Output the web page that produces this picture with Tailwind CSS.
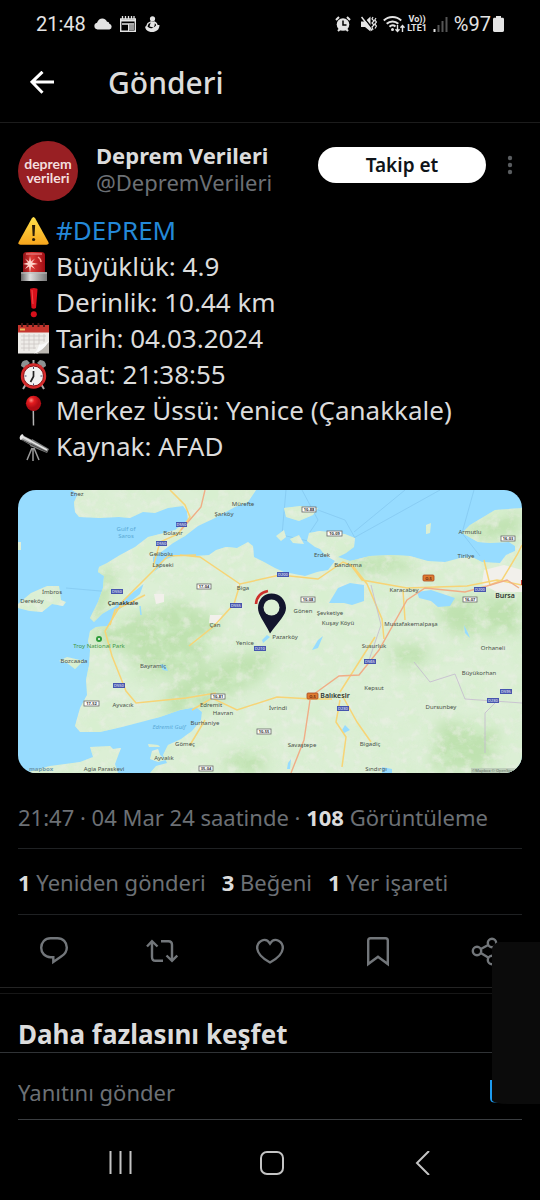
<!DOCTYPE html>
<html lang="tr">
<head>
<meta charset="utf-8">
<meta name="viewport" content="width=device-width, initial-scale=1">
<title>Gönderi</title>
<script src="https://cdn.jsdelivr.net/npm/@tailwindcss/browser@4"></script>
</head>
<body class="bg-black text-[#dcdcdc] font-['Noto_Sans',sans-serif]">
<div class="relative min-h-screen flex flex-col overflow-hidden">

<!-- Status bar -->
<div class="flex h-12 items-center justify-between pl-9 pr-9 font-['Roboto',sans-serif] text-[20px] text-[#e4e4e4]">
  <div class="flex items-center gap-2">
    <span>21:48</span>
    <svg class="w-[18px] h-3" viewBox="0 0 18 12" fill="currentColor"><path d="M3.5 11.500a3.400 3.400 0 0 1-.5-6.700C4 2 6 .5 8.300.5c2.400 0 4 1.300 4.700 3.300 1.200-.2 2.200.6 2.300 1.900a3 3 0 0 1 .2 5.800z"/></svg>
    <svg class="w-4 h-4" viewBox="0 0 16 16" fill="none" stroke="currentColor"><path d="M.7 3v12.200h14.600V3z" stroke-width="1.400"/><path d="M1 4.500h14" stroke-width="2"/><path d="M2.500 0v3M5.500 0v3M8.500 0v3M11.500 0v3M14 0v3" stroke-width="1.300"/><path d="M2 8h12" stroke-width="1.500"/><path d="M9 9h5v5H9z" fill="#999" stroke="none"/><path d="M8.500 8v7"/></svg>
    <svg class="w-4 h-4" viewBox="0 0 16 16" fill="currentColor"><circle cx="8.500" cy="2.800" r="2.600"/><path d="M7 5.500h3.500q1 3.500-1 6l-4-1zM1 10.500h2.500q2 2.500 5 1.500 2.500-.8 4-3h3q0 5-4.500 6.500-3 1-6 0Q1.500 14.500 1 10.500z"/><path d="M7.500 5.500L4 7.500 2.500 11M10 6q3 1 3 4" fill="none" stroke="currentColor" stroke-width="1.400"/></svg>
  </div>
  <div class="flex items-center gap-[6px]">
    <svg class="w-4 h-4" viewBox="0 0 16 16"><circle cx="8" cy="8.500" r="6.300" fill="currentColor"/><path d="M8 4.500V9h3.500" fill="none" stroke="#000" stroke-width="1.500"/><path d="M1 4l3-3M15 4l-3-3M3 15l2-2M13 15l-2-2" stroke="currentColor" stroke-width="2"/></svg>
    <svg class="ml-1 w-4 h-4" viewBox="0 0 16 16"><path d="M0 5.500h4l5.500-5v15L4 11H0z" fill="currentColor"/><path d="M1.500 0l10 12.500" stroke="#000" stroke-width="1.500"/><path d="M.500 1l10.500 13.500" stroke="currentColor" stroke-width="1.500"/><path d="M12 1l-1 2 2 2-2 2 2 2-2 2 1 3M15 2l-1.200 2 1.700 2-1.700 2 1.700 2-1.500 2.500" fill="none" stroke="currentColor" stroke-width="1.200"/></svg>
    <svg class="w-[22px] h-[18px]" viewBox="0 0 22 18" fill="none" stroke="currentColor" stroke-width="2"><path d="M.8 5.500a12.500 12.500 0 0 1 17.400 0M3.700 8.700a8.500 8.500 0 0 1 11.600 0M6.500 11.800a4.500 4.500 0 0 1 6-.3"/><circle cx="9.500" cy="14.500" r="1.500" fill="currentColor" stroke="none"/><path d="M14.500 10v6.500m-2-2.200l2 2.200 2-2.200M19.500 17v-6.500m-2 2.200l2-2.200 2 2.200" stroke-width="1.400"/></svg>
    <div class="-ml-1 flex flex-col items-center text-[9px] leading-[9px] font-bold"><span>Vo))</span><span>LTE1</span></div>
    <svg class="w-[15px] h-[15px]" viewBox="0 0 15 15"><path d="M1.500 12v3" stroke="#e4e4e4" stroke-width="2"/><path d="M5.500 8v7M9.500 4v11M13.500 0v15" stroke="#555" stroke-width="2"/></svg>
    <div class="flex items-center gap-[2px]"><span>%97</span>
    <svg class="w-[11px] h-4" viewBox="0 0 11 16" fill="currentColor"><path d="M3 1.800V0h5v1.800h1.500c1 0 1.500.5 1.500 1.500v11c0 1-.5 1.700-1.500 1.700h-8C.5 16 0 15.300 0 14.300v-11c0-1 .5-1.500 1.500-1.500z"/></svg></div>
  </div>
</div>

<!-- App bar -->
<header class="flex h-[75px] items-center gap-[54px] border-b border-[#1c1c1c] pb-1 pl-[30px]">
  <button aria-label="Geri" class="block"><svg class="w-6 h-6 text-white" viewBox="0 0 24 24" fill="none" stroke="currentColor" stroke-width="3"><path d="M24 11H2M12.500.8L2 11l10.500 10.800"/></svg></button>
  <h1 class="text-[30px] leading-9 font-medium">Gönderi</h1>
</header>

<main>
<article class="px-[18px] pt-[18px]">
  <div class="flex items-center">
    <div class="flex size-[60px] shrink-0 flex-col items-center justify-center rounded-full bg-[#981f23] font-['Lato',sans-serif] text-[14px] leading-[14px] font-bold text-[#f3dede]"><span class="block h-[14px]">deprem</span><span class="block h-[14px]">verileri</span></div>
    <div class="ml-[18px] min-w-0 flex-1 text-[22px] leading-[27px] -mt-1 whitespace-nowrap">
      <a href="#" class="block font-bold">Deprem Verileri</a>
      <a href="#" class="block text-[#6c7075]">@DepremVerileri</a>
    </div>
    <button class="-mt-3 h-9 w-[168px] rounded-full bg-white text-[19px] font-semibold text-[#0f1419]">Takip et</button>
    <button aria-label="Diğer" class="-mt-3 ml-[21px] mr-[9px] block"><svg class="w-[6px] h-5" viewBox="0 0 6 20" fill="#5a5d60"><circle cx="3" cy="3" r="2.200"/><circle cx="3" cy="10" r="2.200"/><circle cx="3" cy="17" r="2.200"/></svg></button>
  </div>

  <div class="mt-[11px] text-[26px] leading-9 whitespace-nowrap">
    <p class="flex items-center gap-[7px]">
      <svg class="size-[31px]" viewBox="0 0 31 31"><defs><linearGradient id="wa" x2="0" y2="1"><stop stop-color="#ffe04a"/><stop offset="1" stop-color="#f7a51c"/></linearGradient></defs><path d="M13.700 3.500q1.800-3 3.600 0l13 23.500q1 2.500-1.800 2.800h-26Q-.3 29.500.7 27z" fill="url(#wa)"/><path d="M14 10h3.200l-.7 11h-1.800z" fill="#2b1c08"/><circle cx="15.600" cy="24.500" r="1.600" fill="#2b1c08"/></svg>
      <a href="#" class="text-[#2489d8]">#DEPREM</a></p>
    <p class="flex items-center gap-[7px]">
      <svg class="size-[31px]" viewBox="0 0 31 31"><defs><linearGradient id="si"><stop stop-color="#8b1015"/><stop offset=".4" stop-color="#dd3a35"/><stop offset="1" stop-color="#9d0b12"/></linearGradient><linearGradient id="sb"><stop stop-color="#666"/><stop offset=".35" stop-color="#ddd"/><stop offset="1" stop-color="#777"/></linearGradient></defs><path d="M5 22V4Q5 1 9 1h14q4 0 4 3v18z" fill="url(#si)"/><path d="M8 3h16" stroke="#e07070" stroke-width="1.500"/><path d="M3 21h26v9H3z" fill="url(#sb)"/><path d="M3 22h26" stroke="#bbb"/><path d="M12 5l1 5.500 4-3-3 4 6 1.500-6 1 3 4-4-2.500L12 22l-1-6.500-4 2.500 3-4-5-1 5-1.500-3-4 4 3z" fill="#ffd6cc"/><path d="M20 6q3 2 3 5" stroke="#ff9b90" stroke-width="1.500" fill="none"/></svg>
      <span>Büyüklük: 4.9</span></p>
    <p class="flex items-center gap-[7px]">
      <svg class="size-[31px]" viewBox="0 0 31 31"><path d="M12 2.500Q12 1 15.800 1t3.700 1.500L18 21q-2.200 1.500-4.500 0z" fill="#d8101b"/><circle cx="15.800" cy="27.300" r="3" fill="#d8101b"/><path d="M14 3l1 14" stroke="#f04a48"/></svg>
      <span>Derinlik: 10.44 km</span></p>
    <p class="flex items-center gap-[7px]">
      <svg class="size-[31px]" viewBox="0 0 31 31"><path d="M0 7h31v14L20 30.500H0z" fill="#eeece8"/><path d="M31 19L18 30.500h13z" fill="#bcb8b2"/><path d="M31 18q-4 3-10 4-1 5-5 8.500 9-2 15-12.500" fill="#fafafa"/><path d="M0 2h31v7.500H0z" fill="#c5352d"/><path d="M4 0v4M9.500 0v4M15 0v4M20.500 0v4M26 0v4" stroke="#4b1a18" stroke-width="2"/><path d="M2 6.500h5" stroke="#e9b75d" stroke-width="2"/><path d="M3 13h25M3 17h24M3 21h18M3 25h15M6 11v17M11 11v17M16 11v15M21 11v10M26 11v8" stroke="#cbc8c4" stroke-width=".8"/></svg>
      <span>Tarih: 04.03.2024</span></p>
    <p class="flex items-center gap-[7px]">
      <svg class="size-[31px]" viewBox="0 0 31 31"><path d="M8 25l-3 5M23 25l3 5M15.500 1v5" stroke="#aaa" stroke-width="2"/><path d="M3 7q0-6 6-6l3 3-6 5zM28 7q0-6-6-6l-3 3 6 5z" fill="#8c9292"/><circle cx="15.500" cy="17" r="12.700" fill="#d52a2b"/><circle cx="15.500" cy="17" r="10" fill="#f1f1f1" stroke="#8c1418"/><path d="M15.500 12v5.500l-3 5.500" stroke="#222" stroke-width="1.700" fill="none"/><path d="M15.500 8v2M15.500 24.500v2M6.500 17h2M22.500 17h2" stroke="#446"/></svg>
      <span>Saat: 21:38:55</span></p>
    <p class="flex items-center gap-[7px]">
      <svg class="size-[31px]" viewBox="0 0 31 31"><defs><radialGradient id="pb" cx=".35" cy=".3"><stop stop-color="#ff8d80"/><stop offset=".4" stop-color="#e51d20"/><stop offset="1" stop-color="#b00c14"/></radialGradient></defs><path d="M15.300 15l.2 15.500" stroke="#b5b5b5" stroke-width="1.500"/><circle cx="15.500" cy="8.300" r="7.600" fill="url(#pb)"/></svg>
      <span>Merkez Üssü: Yenice (Çanakkale)</span></p>
    <p class="flex items-center gap-[7px]">
      <svg class="size-[31px]" viewBox="0 0 31 31"><path d="M14 17L9 29M15 17v13M16 17l5 12" stroke="#9a9a9a" stroke-width="1.500"/><path d="M4 4l12 6-2 5L2 8z" fill="#aaa"/><path d="M14 8l17 10-2 4-17-7z" fill="#7f8080"/><path d="M3 5l26 14" stroke="#e5e5e5" stroke-width="1.500"/><path d="M2 8l27 13" stroke="#444"/><ellipse cx="3.500" cy="6" rx="1.600" ry="3" transform="rotate(25 3.500 6)" fill="#e8e8e8"/></svg>
      <span>Kaynak: AFAD</span></p>
  </div>

  <!-- Map of the epicentre -->
  <div class="mt-[26px] overflow-hidden rounded-[18px]">
  <svg class="block w-full" viewBox="18 490 504 283" role="img" aria-label="Yenice (Çanakkale) deprem haritası" font-family="Noto Sans, sans-serif">
    <defs>
      <filter id="terrain" x="0" y="0" width="1" height="1"><feTurbulence type="fractalNoise" baseFrequency=".045 .06" numOctaves="5" seed="8"/><feColorMatrix values="0 0 0 0 .67  0 0 0 0 .86  0 0 0 0 .61  3.500 0 0 0 -1.550"/></filter>
      <filter id="pale" x="0" y="0" width="1" height="1"><feTurbulence type="fractalNoise" baseFrequency=".11" numOctaves="4" seed="3"/><feColorMatrix values="0 0 0 0 .86  0 0 0 0 .86  0 0 0 0 .82  0 3 0 0 -1.450"/></filter>
      <filter id="soft"><feGaussianBlur stdDeviation="7"/></filter>
      <clipPath id="land">
        <path d="M72 490L78 494 74 502 75 512 79 517 100 518 119 517 130 518 143 512 155 513 168 508 183 506 187 511 188 520 175 530 160 534 148 537 135 547 120 555 107 563 99 567 98 572 104 576 103 588 98 602 90 618 94 622 102 614 114 607 128 596 140 587 150 578 158 566 153 562 153 557 160 553 173 543 185 536 198 526 213 519 235 507 248 502 256 490z"/>
        <path d="M178 555L195 556 209 555 216 550 226 547 237 548 248 542 253 546 254 557 264 562 275 568 284 572 305 576 317 572 328 570 335 561 325 555 320 549 315 547 307 541 309 533 320 531 345 534 355 538 354 547 346 553 338 557 350 561 370 556 390 555 410 556 428 561 445 562 460 558 472 557 482 562 500 563 506 555 515 551 515 546 509 542 490 543 478 542 462 533 470 525 485 516 495 510 522 508V773H150L156 766 167 763 163 755 168 745 181 739 192 731 201 720 202 712 196 707 180 710 160 717 145 721 122 727 100 732 80 732 75 726 80 708 87 695 86 680 89 665 90 650 88 641 90 631 96 627 109 626 117 611 130 602 140 594 145 580 154 572 160 567 164 560z"/>
        <path d="M18 604L31 593 47 586 59 586 61 600 66 602 63 606 52 604 42 612 30 611 18 608zM59 661L67 657 84 661 80 664 75 669 67 663zM284 508L300 506 318 508 313 515 299 521 286 517zM276 536L284 530 286 537 281 541zM290 539L299 535 304 544 293 543zM426 525l5-2-1 10-4 1zM18 542h3v8h-3zM25 773L50 766 80 762 93 757 90 747 110 746 113 749 121 748 115 764 118 773zM148 744l10 1 2 2-11 0zM152 751l6-2 2 6 6 5-8 2-8-3z"/>
      </clipPath>
    </defs>
    <path d="M18 490h504v283H18z" fill="#97dcff"/>
    <g fill="none" stroke="#83c6ee" stroke-width=".7"><path d="M66 588L112 592M286 490L282 535 308 541M302 490L318 520 310 532M350 540L440 490M354 532L405 490M474 490L462 533 480 556M318 510L345 520 355 538"/></g>
    <g clip-path="url(#land)">
      <path d="M18 490h504v283H18z" fill="#dcefd5"/>
      <g fill="#bfe2b0" filter="url(#soft)"><path d="M98 570l20 0-15 45-15 8zM88 632l25-10 30 12-10 20-30-10zM120 620l60-20 40 20-20 50-60 10zM170 685l60-30 50-5-20 30-60 30-40 10zM340 555h60l20 15-60 5zM430 600l92-5v40l-70 0zM390 645l40 0-10 25-30-5zM440 720l60 10-10 40-60 0zM460 530l60-20v25l-40 5zM225 755l40-5 0 23-40 0z"/></g>
      <rect x="18" y="490" width="504" height="283" filter="url(#terrain)" opacity=".55"/>
      <rect x="18" y="490" width="504" height="283" filter="url(#pale)" opacity=".5"/>
      <path d="M484 570l20-5 18 5v22l-25 0-15-8zM154 594l10 0 0 8-8 2zM210 615l12 0-3 8-10 0z" fill="#f2f0eb"/>
    </g>
    <g fill="#97dcff"><path d="M329 603l9-15 12-5 14 2v16l-12 4-8-2zM417 592l14-2 12 4 12 4-5 8-12 1-7-6-12-3zM312 650l6-10 5-4-5 12zM160 664l5 1 3 6-5-1zM262 640l5-5 3 2-7 6zM288 763l3-4-1 10-3 0zM342 730l3-5 5 5-6 3zM382 767l10 2 0 4-10 0zM464 625l4 8 2 5-5-5z"/><path d="M140 606l1 9" stroke="#97dcff" stroke-width="1.500"/></g>
    <g fill="none" stroke="#f7d476" stroke-width="1.500"><path d="M170 490l15 15 5 12-12 17-18 8-7 25M196 555l-28 1-20 20-25 25-18 30 7 25 14 35 10 12 50-5 30-5M180 555l20 2 40 27 40-9 38 4 25-17 10 4 14 18 15 35 2 20M240 584l-6 20-20 22-25 20M350 564l12 16 45 8 60-2 30-6 25 5M403 590l2 30M484 560l6 25 12-5 15-25 5-10M192 710l20-12 25 12 40-13 35 2 20 0M375 637l-35 55M340 700l-4 22 10 15-4 30M342 695l15 27 14 20M110 625l5-15 30-15M190 745l15-25"/></g>
    <g fill="none" stroke="#f0ad86" stroke-width="1.400"><path d="M314 694l25-18 20-1 20-25 28-50 18-12 40 4 22-6 20-6 12 8M310 700l-6 40-13 33M205 490l-4 17-20 23"/></g>
    <g fill="none" stroke="#c4b9cf" stroke-width=".8"><path d="M371 585l10 40-12 35M414 662l16 20 25-8 10 25 57 4M495 703l-10 10 0 40"/></g>
    <g fill="#4655ae"><rect x="176" y="522" width="11" height="5"/><rect x="156" y="541" width="11" height="5"/><rect x="111" y="589" width="12" height="5"/><rect x="277" y="572" width="12" height="5"/><rect x="230" y="603" width="12" height="5"/><rect x="474" y="587" width="12" height="5"/><rect x="113" y="683" width="12" height="5"/><rect x="254" y="646" width="12" height="5"/><rect x="337" y="706" width="12" height="5"/><rect x="364" y="659" width="12" height="5"/><rect x="500" y="689" width="12" height="5"/><rect x="487" y="698" width="12" height="5"/></g>
    <g font-size="4" fill="#fff" text-anchor="middle"><text x="181.500" y="526">D550</text><text x="161.500" y="545">D550</text><text x="117" y="593">D550</text><text x="283" y="576">D200</text><text x="236" y="607">D555</text><text x="480" y="591">D200</text><text x="119" y="687">D550</text><text x="260" y="650">D210</text><text x="343" y="710">D230</text><text x="370" y="663">D565</text><text x="506" y="693">D595</text><text x="493" y="702">D230</text></g>
    <g fill="#fff" stroke="#666" stroke-width=".8"><rect x="302" y="507" width="14" height="5"/><rect x="327" y="531" width="15" height="5"/><rect x="197" y="584" width="14" height="5"/><rect x="301" y="597" width="14" height="5"/><rect x="501" y="536" width="14" height="5"/><rect x="463" y="597" width="14" height="5"/><rect x="84" y="701" width="15" height="5"/><rect x="211" y="694" width="14" height="5"/><rect x="257" y="729" width="14" height="5"/><rect x="199" y="766" width="14" height="5"/></g>
    <g font-size="4" fill="#333" text-anchor="middle" font-weight="700"><text x="309" y="511">10-88</text><text x="334.500" y="535">10-09</text><text x="204" y="588">17-04</text><text x="308" y="601">10-08</text><text x="508" y="540">16-03</text><text x="470" y="601">16-07</text><text x="91.500" y="705">17-52</text><text x="218" y="698">10-81</text><text x="264" y="733">10-55</text><text x="206" y="770">35-04</text></g>
    <g fill="#e07c31" stroke="#a84820" stroke-width=".8"><rect x="423" y="575" width="11" height="6" rx="1"/><rect x="307" y="693" width="11" height="6" rx="1"/></g><path d="M521 580h2v5h-2z" fill="#c43b31"/>
    <g font-size="4" fill="#692a11" text-anchor="middle" font-weight="700"><text x="428.500" y="580">O-5</text><text x="312.500" y="698">O-5</text></g>
    <g font-size="6" fill="#4a514a" text-anchor="middle">
      <text x="77" y="496">Enez</text><text x="243" y="506">Mürefte</text><text x="224" y="516">Şarköy</text><text x="173" y="535">Bolayır</text><text x="161" y="556">Gelibolu</text><text x="163" y="567">Lapseki</text><text x="52" y="594">İmbros</text><text x="32" y="603">Dereköy</text><text x="243" y="590">Biga</text><text x="215" y="627">Çan</text><text x="303" y="613">Gönen</text><text x="330" y="615">Şevketiye</text><text x="338" y="625">Kuşay Köyü</text><text x="322" y="557">Erdek</text><text x="348" y="567">Bandırma</text><text x="470" y="534">Armutlu</text><text x="466" y="558">Tirilye</text><text x="404" y="592">Karacabey</text><text x="411" y="626">Mustafakemalpaşa</text><text x="374" y="648">Susurluk</text><text x="493" y="650">Orhaneli</text><text x="479" y="675">Büyükorhan</text><text x="374" y="690">Kepsut</text><text x="441" y="709">Dursunbey</text><text x="370" y="746">Bigadiç</text><text x="376" y="771">Sındırgı</text><text x="245" y="645">Yenice</text><text x="285" y="639">Pazarköy</text><text x="278" y="710">İvrindi</text><text x="302" y="747">Savaştepe</text><text x="211" y="707">Edremit</text><text x="223" y="715">Havran</text><text x="205" y="725">Burhaniye</text><text x="185" y="746">Gömeç</text><text x="164" y="760">Ayvalık</text><text x="153" y="668">Bayramiç</text><text x="123" y="707">Ayvacık</text><text x="74" y="663">Bozcaada</text><text x="104" y="771">Agia Paraskevi</text>
    </g>
    <g font-size="7" font-weight="600" fill="#2f332f" text-anchor="middle"><text x="123" y="605" font-size="6">Çanakkale</text><text x="505" y="598">Bursa</text><text x="335" y="698">Balıkesir</text></g>
    <g font-size="6" fill="#5aa9d6" text-anchor="middle"><text x="126" y="531">Gulf of</text><text x="126" y="538">Saros</text><text x="169" y="729" font-style="italic">Edremit Gulf</text></g>
    <circle cx="99" cy="639" r="3" fill="#2f9d3b"/><circle cx="99" cy="639" r="1" fill="#fff"/><text x="99" y="648" font-size="6" fill="#3f9646" text-anchor="middle">Troy National Park</text>
    <path d="M256 604Q257 593 268 591" fill="none" stroke="#cc302b" stroke-width="2.600"/>
    <path d="M271.500 593.500c8 0 14.500 6 14.500 14.500 0 7-7 13-16 25.500-6-12.500-12-18.500-12-25.500 0-8.500 6-14.500 13.500-14.500z" fill="#13152d"/><circle cx="271.500" cy="607.500" r="8" fill="#dcefd5"/>
    <path d="M471 768h51v5h-51z" fill="#b8c7b5" opacity=".8"/><text x="472" y="772" font-size="4" fill="#647064">©Mapbox © OpenStreet</text><text x="29" y="771" font-size="6" fill="#6d9aaf" font-weight="700">mapbox</text>
  </svg>
  </div>

  <p class="border-b border-[#1f2123] pt-9 pb-[22px] text-[22px] leading-[17px] text-[#6c7075] whitespace-nowrap">21:47 · 04 Mar 24 saatinde · <b class="text-[#dcdcdc]">108</b> Görüntüleme</p>
  <div class="flex gap-4 border-b border-[#1f2123] pt-[18px] pb-4 text-[22px] leading-[31px] text-[#6c7075] whitespace-nowrap">
    <a href="#"><b class="text-[#dcdcdc]">1</b> Yeniden gönderi</a><a href="#"><b class="text-[#dcdcdc]">3</b> Beğeni</a><a href="#"><b class="text-[#dcdcdc]">1</b> Yer işareti</a>
  </div>
</article>

<div class="grid h-[73px] grid-cols-5 place-items-center border-b border-[#242424] text-[#72767a]">
  <button aria-label="Yanıtla"><svg class="w-8 h-8" viewBox="0 0 32 32" fill="none" stroke="currentColor" stroke-width="2.400"><path d="M12.500 3.200h7c5.500 0 9.300 4 9.300 9.300 0 4-2 6.700-5.300 8.800L15.300 27v-4.800h-2.800C7 22.200 3.200 18 3.200 12.700S7 3.200 12.500 3.200z"/></svg></button>
  <button aria-label="Yeniden gönder"><svg class="w-8 h-8" viewBox="0 0 32 32" fill="none" stroke="currentColor" stroke-width="2.400"><path d="M1 11.500L6 6.200l5.500 5.300M6 7v15c0 2.500 1.200 3.800 3.500 3.800H17M15 6.200h7.500c2.300 0 3.500 1.300 3.500 3.500v15M20.500 20.500l5.500 5.300 5.300-5.300"/></svg></button>
  <button aria-label="Beğen"><svg class="w-8 h-8" viewBox="0 0 32 32" fill="none" stroke="currentColor" stroke-width="2.400"><path d="M16 8.500C13.800 5 10.500 4.200 7.500 5.700 4.500 7.200 3 10.200 3.200 13.500c.5 5 5 9.800 12.800 14 7.800-4.200 12.300-9 12.800-14 .2-3.300-1.300-6.300-4.300-7.800-3-1.500-6.300-.7-8.500 2.800z"/></svg></button>
  <button aria-label="Yer işareti"><svg class="w-8 h-8" viewBox="0 0 32 32" fill="none" stroke="currentColor" stroke-width="2.400"><path d="M6.200 29V5.500c0-1.500.8-2.300 2.300-2.300h15c1.500 0 2.300.8 2.300 2.300V29L16 21.700z"/></svg></button>
  <button aria-label="Paylaş"><svg class="w-8 h-8" viewBox="0 0 32 32" fill="none" stroke="currentColor" stroke-width="2.400"><circle cx="7" cy="16" r="4.200"/><circle cx="22" cy="8" r="4.200"/><circle cx="22" cy="25" r="4.200"/><path d="M10.800 14l7.400-4M10.800 18l7.400 4.500"/></svg></button>
</div>
<div class="h-[6px] border-b border-[#171717]"></div>
<h2 class="border-b border-[#303336] px-[18px] pt-[22px] text-[26px] leading-9 font-bold whitespace-nowrap">Daha fazlasını keşfet</h2>
<form class="mx-[18px] flex h-[67px] items-center border-b border-[#3a3d40] pt-3">
  <input aria-label="Yanıtını gönder" placeholder="Yanıtını gönder" class="min-w-0 flex-1 bg-transparent text-[22px] text-white outline-none placeholder:text-[#6c7075]">
  <button type="button" aria-label="Fotoğraf" class="block"><svg class="w-8 h-6" viewBox="0 0 32 24" fill="none" stroke="#1d9bf0" stroke-width="3"><path d="M1.500 0v18q0 3 3 3h24V2H5"/></svg></button>
</form>
</main>

<nav class="flex items-center justify-between px-[108px] pt-[31px] pb-6 text-[#c4c4c4]">
  <button aria-label="Son uygulamalar"><svg class="size-6" viewBox="0 0 24 24" fill="none" stroke="currentColor" stroke-width="2"><path d="M2.500 0v23M12.500 0v23M22.500 0v23"/></svg></button>
  <button aria-label="Ana ekran" class="ml-1"><svg class="size-6" viewBox="0 0 24 24" fill="none" stroke="currentColor" stroke-width="2"><rect x="1" y="1" width="22" height="22" rx="6"/></svg></button>
  <button aria-label="Geri"><svg class="size-6" viewBox="0 0 24 24" fill="none" stroke="currentColor" stroke-width="2"><path d="M21 0L9 12l12 12"/></svg></button>
</nav>

<!-- Edge panel over the page -->
<div class="absolute top-[942px] right-0 h-[162px] w-12 rounded-tl-lg rounded-bl-[16px_4px] bg-[#0b0b0b]"></div>
</div>
</body>
</html>
